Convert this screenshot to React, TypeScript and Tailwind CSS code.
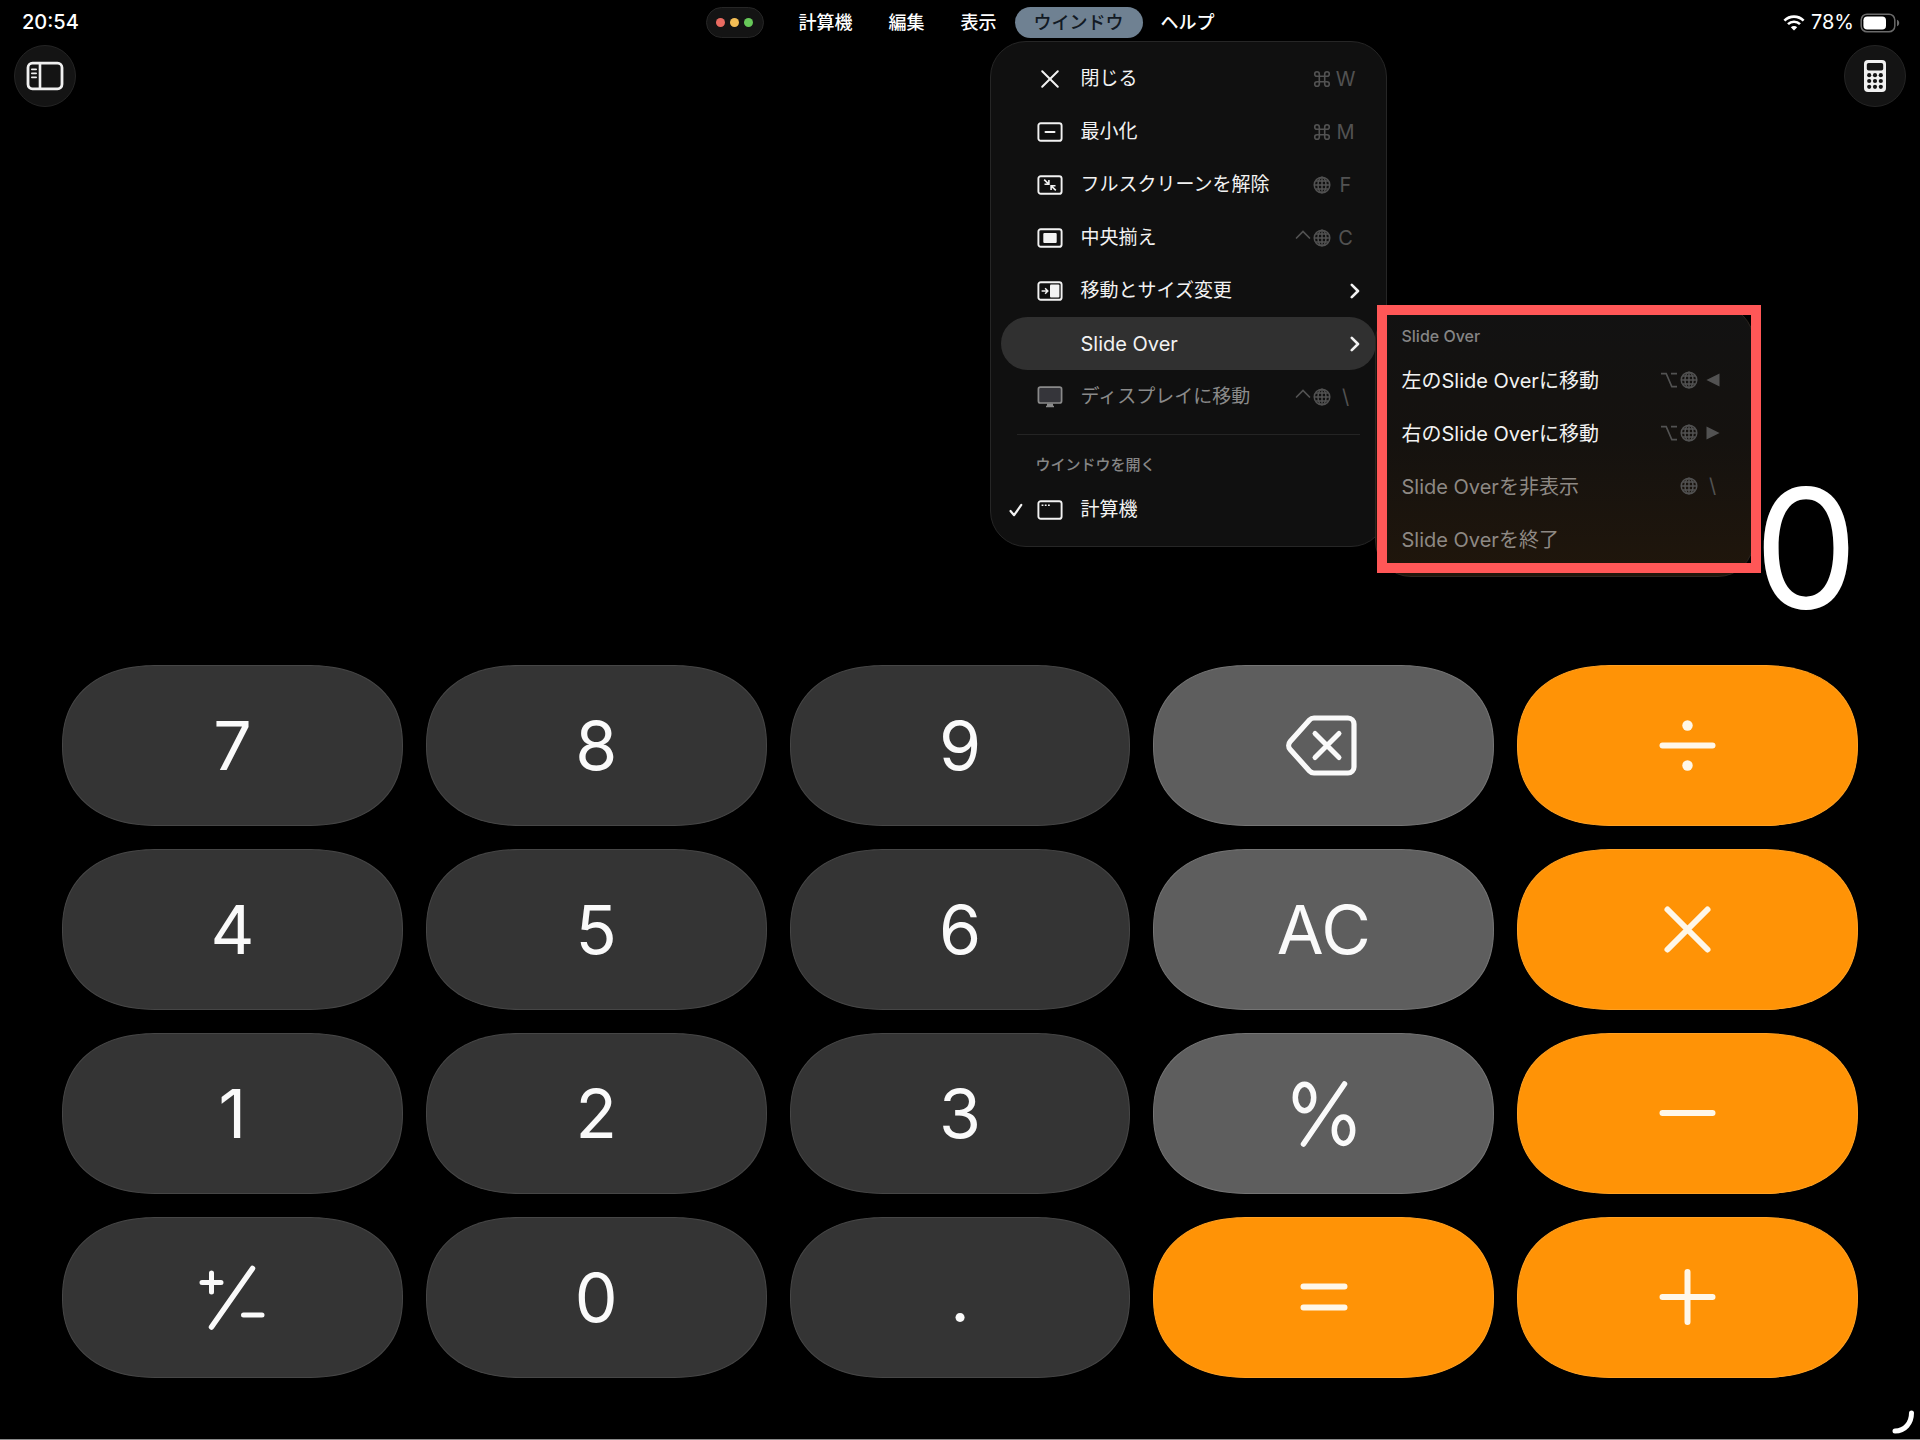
import type { ReactNode } from 'react'

interface MenuItem {
  label: ReactNode
  icon?: ReactNode
  modifiers?: ReactNode
  keyLabel?: ReactNode
  submenu?: boolean
  active?: boolean
  disabled?: boolean
  checked?: boolean
}

type Tone = 'dark' | 'light' | 'orange'

interface CalcKey {
  name: string
  tone: Tone
  face: ReactNode
}

const MENU_FONT = 'font-[Inter,"Noto_Sans_CJK_JP",sans-serif]'

/* ---------- icons ---------- */

const Frame = ({ children }: { children?: ReactNode }) => (
  <svg width="26" height="20" viewBox="0 0 26 20" fill="none" stroke="currentColor" strokeWidth="1.9">
    <rect x="1.4" y="1.2" width="23.2" height="17.6" rx="2.4" />
    {children}
  </svg>
)

const CloseIcon = () => (
  <svg width="26" height="20" viewBox="0 0 26 20" fill="none" stroke="currentColor" strokeWidth="2" strokeLinecap="round">
    <path d="M5.2 2.2l15.6 15.6M20.8 2.2L5.2 17.8" />
  </svg>
)

const MinimizeIcon = () => (
  <Frame>
    <path d="M8.5 10h9" strokeWidth="2" strokeLinecap="round" />
  </Frame>
)

const ExitFullIcon = () => (
  <Frame>
    <path d="M7.2 4.6l4.3 4.3M11.9 4.9v4.4H7.5M18.8 15.4l-4.3-4.3M14.1 15.1v-4.4h4.4" strokeWidth="1.6" />
  </Frame>
)

const CenterIcon = () => (
  <Frame>
    <rect x="6.3" y="5" width="13.4" height="10" rx="1" fill="currentColor" stroke="none" />
  </Frame>
)

const MoveResizeIcon = () => (
  <Frame>
    <rect x="13" y="3.4" width="9.4" height="13.2" rx="1" fill="currentColor" stroke="none" />
    <path d="M4.6 10h6M8.1 7.3l2.7 2.7-2.7 2.7" strokeWidth="1.5" />
  </Frame>
)

const DisplayIcon = () => (
  <svg width="26" height="22" viewBox="0 0 26 22" fill="none" stroke="currentColor" strokeWidth="1.7">
    <rect x="1.4" y="1.2" width="23.2" height="15.8" rx="2" fill="#35353a" />
    <path d="M10 17.5h6v2.2h1v1.5H9v-1.5h1z" fill="currentColor" stroke="none" />
  </svg>
)

const WindowIcon = () => (
  <Frame>
    <path d="M4.6 5.3h1.8M7.8 5.3h1.8M11 5.3h1.8" strokeWidth="1.5" />
  </Frame>
)

const CheckIcon = () => (
  <svg width="14" height="14" viewBox="0 0 14 14" fill="none" stroke="currentColor" strokeWidth="2.2" strokeLinecap="round" strokeLinejoin="round">
    <path d="M1.5 8l3.6 4.2L12.3 1.8" />
  </svg>
)

const ChevronIcon = () => (
  <svg width="10" height="16" viewBox="0 0 10 16" fill="none" stroke="currentColor" strokeWidth="2.6" strokeLinecap="round" strokeLinejoin="round">
    <path d="M1.8 1.8L8 8l-6.2 6.2" />
  </svg>
)

const CommandIcon = () => (
  <svg width="18" height="18" viewBox="0 0 18 18" fill="none" stroke="currentColor" strokeWidth="1.6">
    <path d="M6.3 4v10M11.7 4v10M4 6.3h10M4 11.7h10" />
    <path d="M6.3 4A2.3 2.3 0 1 0 4 6.3M11.7 4A2.3 2.3 0 1 1 14 6.3M11.7 14A2.3 2.3 0 1 0 14 11.7M6.3 14A2.3 2.3 0 1 1 4 11.7" />
  </svg>
)

const GlobeIcon = () => (
  <svg width="18" height="18" viewBox="0 0 18 18" fill="none" stroke="currentColor" strokeWidth="1.5">
    <circle cx="9" cy="9" r="7.8" />
    <ellipse cx="9" cy="9" rx="4" ry="7.8" />
    <path d="M9 1.2v15.6M1.2 9h15.6M2.8 4.9h12.4M2.8 13.1h12.4" />
  </svg>
)

const ControlIcon = () => (
  <svg width="16" height="18" viewBox="0 0 16 18" fill="none" stroke="currentColor" strokeWidth="1.7" strokeLinecap="round">
    <path d="M1.5 9L8 2.5 14.5 9" />
  </svg>
)

const OptionIcon = () => (
  <svg width="18" height="18" viewBox="0 0 18 18" fill="none" stroke="currentColor" strokeWidth="1.6">
    <path d="M1 2.6h5.2l5.6 13H17M11 2.6h6" />
  </svg>
)

const ArrowLeftKey = () => (
  <svg width="14" height="14" viewBox="0 0 14 14" fill="currentColor">
    <path d="M13.5 .4v13.2L.4 7z" />
  </svg>
)

const ArrowRightKey = () => (
  <svg width="14" height="14" viewBox="0 0 14 14" fill="currentColor">
    <path d="M.5 .4v13.2L13.6 7z" />
  </svg>
)

const SidebarIcon = () => (
  <svg width="38" height="30" viewBox="0 0 38 30" fill="none" stroke="currentColor">
    <rect x="2" y="2.2" width="34" height="25.6" rx="4.5" strokeWidth="2.8" />
    <path d="M14 2.5v25" strokeWidth="2.6" />
    <path d="M5.8 8.4h4.4M5.8 12.4h4.4M5.8 16.4h4.4" strokeWidth="1.6" strokeLinecap="round" />
  </svg>
)

const CalculatorIcon = () => (
  <svg width="24" height="32" viewBox="0 0 24 32">
    <rect x="1" y="0" width="22" height="32" rx="4" fill="#f0f0f0" />
    <rect x="3.8" y="3" width="16.4" height="7.6" rx="1.8" fill="#141414" />
    {[15.2, 21, 26.8].map((cy) =>
      [6.2, 12, 17.8].map((cx) => <circle key={`${cx}-${cy}`} cx={cx} cy={cy} r="2.1" fill="#141414" />),
    )}
  </svg>
)

const WifiIcon = () => (
  <svg width="22" height="16" viewBox="0 0 22 16" fill="none" stroke="currentColor" strokeWidth="2.6">
    <path d="M1.4 5.6a13.6 13.6 0 0 1 19.2 0" />
    <path d="M5 9.2a8.5 8.5 0 0 1 12 0" />
    <path d="M11 15.6l-3.2-3.3a4.5 4.5 0 0 1 6.4 0z" fill="currentColor" stroke="none" />
  </svg>
)

const BatteryIcon = () => (
  <svg width="40" height="20" viewBox="0 0 40 20" fill="none">
    <rect x="1.2" y="1.2" width="33.6" height="17.6" rx="5.8" stroke="#6a6a6a" strokeWidth="1.5" />
    <rect x="3.4" y="3.4" width="22.6" height="13.2" rx="3.8" fill="#fff" />
    <path d="M37 6.8c1.4.5 2.2 1.7 2.2 3.2s-.8 2.7-2.2 3.2z" fill="#6a6a6a" />
  </svg>
)

const Glyph = ({ children }: { children: ReactNode }) => (
  <svg
    className="overflow-visible"
    width="72"
    height="72"
    viewBox="0 0 72 72"
    fill="none"
    stroke="currentColor"
    strokeWidth="6"
    strokeLinecap="round"
    strokeLinejoin="round"
  >
    {children}
  </svg>
)

/* ---------- data ---------- */

const digit = (d: string): CalcKey => ({ name: d, tone: 'dark', face: d })

const KEYS: CalcKey[] = [
  digit('7'),
  digit('8'),
  digit('9'),
  {
    name: '削除',
    tone: 'light',
    face: (
      <Glyph>
        <path d="M26 9h34a6 6 0 0 1 6 6v43a6 6 0 0 1-6 6H26a6 6 0 0 1-4.500-2L2.200 40.500a6 6 0 0 1 0-8L21.500 11A6 6 0 0 1 26 9z" strokeWidth="5.200" />
        <path d="M27 24.500l24 24M51 24.500l-24 24" strokeWidth="5" />
      </Glyph>
    ),
  },
  {
    name: '割る',
    tone: 'orange',
    face: (
      <Glyph>
        <path d="M10.500 36.500h50" />
        <circle cx="35.500" cy="16.500" r="5.200" fill="currentColor" stroke="none" />
        <circle cx="35.500" cy="56.500" r="5.200" fill="currentColor" stroke="none" />
      </Glyph>
    ),
  },
  digit('4'),
  digit('5'),
  digit('6'),
  { name: 'AC', tone: 'light', face: 'AC' },
  { name: '掛ける', tone: 'orange', face: <Glyph><path d="M15.500 16.500l40 40M55.500 16.500l-40 40" /></Glyph> },
  digit('1'),
  digit('2'),
  digit('3'),
  {
    name: 'パーセント',
    tone: 'light',
    face: (
      <Glyph>
        <ellipse cx="16.500" cy="20.500" rx="9.200" ry="13.200" strokeWidth="5.500" />
        <ellipse cx="55.500" cy="53.200" rx="9.200" ry="13.200" strokeWidth="5.500" />
        <path d="M56.500 7L15.500 67" strokeWidth="5.500" />
      </Glyph>
    ),
  },
  { name: '引く', tone: 'orange', face: <Glyph><path d="M10.500 36h50" /></Glyph> },
  {
    name: '符号を反転',
    tone: 'dark',
    face: (
      <Glyph>
        <path d="M56.500 7.500L15.500 66" strokeWidth="5.500" />
        <path d="M6 21.500h19M15.500 12v19M47.500 54h18.500" strokeWidth="5" />
      </Glyph>
    ),
  },
  digit('0'),
  digit('.'),
  { name: 'イコール', tone: 'orange', face: <Glyph><path d="M15.500 25.500h41M15.500 46.500h41" /></Glyph> },
  { name: '足す', tone: 'orange', face: <Glyph><path d="M10.500 36h50M35.500 11v50" /></Glyph> },
]

const TONES: Record<Tone, string> = {
  dark: 'bg-[#343434] border-[#464646] text-[#fafafa]',
  light: 'bg-[#5e5e5e] border-[#747474] text-[#fafafa]',
  orange: 'bg-[#ff9306] border-[#ffa022] text-[#fff7e8]',
}

const WINDOW_ITEMS: MenuItem[] = [
  { label: '閉じる', icon: <CloseIcon />, modifiers: <CommandIcon />, keyLabel: 'W' },
  { label: '最小化', icon: <MinimizeIcon />, modifiers: <CommandIcon />, keyLabel: 'M' },
  { label: 'フルスクリーンを解除', icon: <ExitFullIcon />, modifiers: <GlobeIcon />, keyLabel: 'F' },
  { label: '中央揃え', icon: <CenterIcon />, modifiers: <><ControlIcon /><GlobeIcon /></>, keyLabel: 'C' },
  { label: '移動とサイズ変更', icon: <MoveResizeIcon />, submenu: true },
  { label: <span className="text-[20px]">Slide Over</span>, submenu: true, active: true },
  {
    label: 'ディスプレイに移動',
    icon: <DisplayIcon />,
    modifiers: <><ControlIcon /><GlobeIcon /></>,
    keyLabel: '\\',
    disabled: true,
  },
]

const SLIDE_OVER_ITEMS: MenuItem[] = [
  { label: '左のSlide Overに移動', modifiers: <><OptionIcon /><GlobeIcon /></>, keyLabel: <ArrowLeftKey /> },
  { label: '右のSlide Overに移動', modifiers: <><OptionIcon /><GlobeIcon /></>, keyLabel: <ArrowRightKey /> },
  { label: 'Slide Overを非表示', modifiers: <GlobeIcon />, keyLabel: '\\', disabled: true },
  { label: 'Slide Overを終了', disabled: true },
]

/* ---------- menu parts ---------- */

function Shortcut({ modifiers, keyLabel }: Pick<MenuItem, 'modifiers' | 'keyLabel'>) {
  return (
    <span className="ml-auto flex items-center gap-[5px] text-[#525252]">
      <span className="flex items-center gap-[2px]">{modifiers}</span>
      <span className="flex w-5 justify-center text-[20px]">{keyLabel}</span>
    </span>
  )
}

function WindowRow({ item }: { item: MenuItem }) {
  return (
    <li>
      <button
        type="button"
        disabled={item.disabled}
        className={`flex h-[53px] w-full items-center rounded-full pl-2 text-[19px] ${
          item.submenu ? 'pr-4' : 'pr-5'
        } ${item.active ? 'bg-[#303030]' : ''} ${item.disabled ? 'text-[#8a8a8a]' : 'text-[#f2f2f2]'}`}
      >
        <span className="flex w-7 shrink-0">{item.checked && <CheckIcon />}</span>
        <span className="flex w-11 shrink-0">{item.icon}</span>
        <span className="pt-[2px] whitespace-nowrap">{item.label}</span>
        {item.submenu ? (
          <span className="ml-auto">
            <ChevronIcon />
          </span>
        ) : (
          item.keyLabel && <Shortcut modifiers={item.modifiers} keyLabel={item.keyLabel} />
        )}
      </button>
    </li>
  )
}

function SlideOverMenu() {
  return (
    <div className="absolute top-[263px] left-[384px] w-[379px] rounded-[36px] border border-[#2c2620] bg-linear-to-b from-[#121212] via-[#15120f] to-[#20160b]">
      <p className="flex h-[47px] items-end pb-[5px] pl-[26px] text-[16px] font-medium text-[#858585]">Slide Over</p>
      <ul className="pb-[11px]">
        {SLIDE_OVER_ITEMS.map((item, i) => (
          <li key={i}>
            <button
              type="button"
              disabled={item.disabled}
              className={`flex h-[53px] w-full items-center pr-[30px] pl-[26px] text-[20px] whitespace-nowrap ${
                item.disabled ? 'text-[#8e8984]' : 'text-[#f2f2f2]'
              }`}
            >
              <span className="pt-[2px]">{item.label}</span>
              {item.keyLabel && <Shortcut modifiers={item.modifiers} keyLabel={item.keyLabel} />}
            </button>
          </li>
        ))}
      </ul>
      {/* highlight frame around the submenu */}
      <div className="pointer-events-none absolute -top-px left-px h-[268px] w-[384px] border-[10px] border-[#ff5757]" />
    </div>
  )
}

function WindowMenu() {
  return (
    <div className="absolute top-[34px] -left-[25px] z-10 w-[397px] rounded-[36px] border border-[#262626] bg-[#101010] font-normal">
      <ul className="px-[10px] pt-[10px]">
        {WINDOW_ITEMS.map((item, i) => (
          <WindowRow key={i} item={item} />
        ))}
      </ul>
      <hr className="mx-[26px] mt-[11px] border-[#242424]" />
      <p className="flex h-12 items-center pt-3 pl-[45px] text-[15px] font-medium text-[#858585]">ウインドウを開く</p>
      <ul className="px-[10px] pb-[10px]">
        <WindowRow item={{ label: '計算機', icon: <WindowIcon />, checked: true }} />
      </ul>
      <SlideOverMenu />
    </div>
  )
}

/* ---------- page ---------- */

function MenuBar() {
  const item = 'h-[31px] px-[18px] flex items-center whitespace-nowrap'
  return (
    <header className="grid grid-cols-[1fr_auto_1fr] items-center pt-[7px] text-white">
      <time className="pl-[22px] text-[20px] leading-[31px] font-medium">20:54</time>
      <nav className="flex items-center gap-[17px] pl-[18px] text-[18px] font-medium">
        <button
          type="button"
          aria-label="ウインドウコントロール"
          className="flex h-[31px] w-[58px] items-center justify-center gap-[5px] rounded-full border border-[#262626] bg-[#141414]"
        >
          <span className="size-[9px] rounded-full bg-[#e96b61]" />
          <span className="size-[9px] rounded-full bg-[#f3bd55]" />
          <span className="size-[9px] rounded-full bg-[#67c859]" />
        </button>
        <div className="flex">
          <button type="button" className={item}>計算機</button>
          <button type="button" className={item}>編集</button>
          <button type="button" className={item}>表示</button>
          <div className="relative">
            <button
              type="button"
              className="flex h-[31px] items-center rounded-full bg-[#6f8192] px-[19px] whitespace-nowrap text-[#121a24]"
            >
              ウインドウ
            </button>
            <WindowMenu />
          </div>
          <button type="button" className={item}>ヘルプ</button>
        </div>
      </nav>
      <div className="flex items-center justify-end gap-[6px] pr-5 text-[20px] leading-[31px]">
        <WifiIcon />
        <span>78%</span>
        <BatteryIcon />
      </div>
    </header>
  )
}

const roundButton =
  'flex size-[62px] items-center justify-center rounded-full border border-[#242424] bg-[#141414] text-[#f0f0f0]'

export default function App() {
  return (
    <div className={`relative flex min-h-screen flex-col overflow-hidden border-b border-[#8a8a8a] bg-black ${MENU_FONT}`}>
      <MenuBar />

      <div className="flex justify-between px-[14px] pt-[7px]">
        <button type="button" aria-label="サイドバー" className={roundButton}>
          <SidebarIcon />
        </button>
        <button type="button" aria-label="計算機モード" className={roundButton}>
          <CalculatorIcon />
        </button>
      </div>

      <main className="flex flex-1 flex-col justify-end px-[62px] pb-[61px]">
        <output className="pb-[17px] text-right text-[165px] leading-[200px] text-white">0</output>
        <div className="grid grid-cols-5 gap-[23px]">
          {KEYS.map((k) => (
            <button
              key={k.name}
              type="button"
              aria-label={k.name}
              className={`flex h-[161px] items-center justify-center rounded-[96px/50%] border pb-[2px] text-[68px] [corner-shape:superellipse(1.2)] ${TONES[k.tone]}`}
            >
              {k.face}
            </button>
          ))}
        </div>
      </main>

      {/* corner resize handle */}
      <svg className="absolute right-[4px] bottom-[4px]" width="26" height="26" viewBox="0 0 26 26" fill="none" stroke="#fff" strokeWidth="5" strokeLinecap="round">
        <path d="M21.5 4C21.5 14 15 22 5 22" />
      </svg>
    </div>
  )
}
